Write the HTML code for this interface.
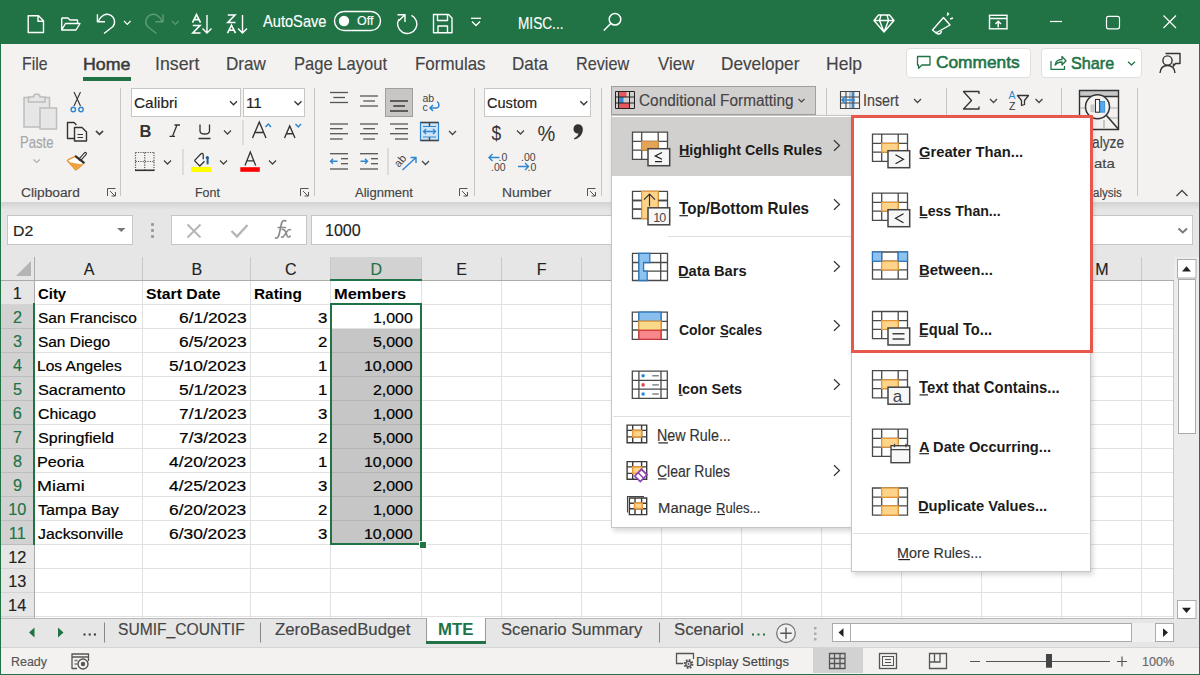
<!DOCTYPE html><html><head><meta charset="utf-8"><style>
html,body{margin:0;padding:0;}
body{width:1200px;height:675px;position:relative;overflow:hidden;background:#fff;font-family:"Liberation Sans",sans-serif;}
.t{position:absolute;white-space:nowrap;line-height:1;transform-origin:0 0;}
svg{overflow:visible}
</style></head><body>
<div style="position:absolute;left:0px;top:0px;width:1200px;height:44px;background:#217346"></div><div style="position:absolute;left:0px;top:44px;width:1200px;height:158px;background:#F3F2F1"></div><div style="position:absolute;left:0px;top:202px;width:1200px;height:55px;background:linear-gradient(#d2d2d2,#e6e6e6 8px)"></div><div style="position:absolute;left:7px;top:215px;width:126px;height:30px;background:#fff;border:1px solid #c6c6c6;box-sizing:border-box"></div><div style="position:absolute;left:171px;top:215px;width:136px;height:30px;background:#fff;border:1px solid #c6c6c6;box-sizing:border-box"></div><div style="position:absolute;left:311px;top:215px;width:882px;height:30px;background:#fff;border:1px solid #c6c6c6;box-sizing:border-box"></div><div style="position:absolute;left:151px;top:223px;width:3px;height:3px;background:#9a9a9a;border-radius:1px"></div><div style="position:absolute;left:151px;top:229px;width:3px;height:3px;background:#9a9a9a;border-radius:1px"></div><div style="position:absolute;left:151px;top:235px;width:3px;height:3px;background:#9a9a9a;border-radius:1px"></div><div style="position:absolute;left:0px;top:257px;width:1174px;height:24px;background:#e6e6e6"></div><div style="position:absolute;left:0px;top:280px;width:1174px;height:1px;background:#ababab"></div><div style="position:absolute;left:0px;top:281px;width:35px;height:337px;background:#e6e6e6"></div><div style="position:absolute;left:34px;top:257px;width:1px;height:361px;background:#ababab"></div><div style="position:absolute;left:35px;top:281px;width:1139px;height:337px;background:#fff"></div><div style="position:absolute;left:142px;top:281px;width:1px;height:337px;background:#e1e1e1"></div><div style="position:absolute;left:142px;top:257px;width:1px;height:23px;background:#c8c8c8"></div><div style="position:absolute;left:250px;top:281px;width:1px;height:337px;background:#e1e1e1"></div><div style="position:absolute;left:250px;top:257px;width:1px;height:23px;background:#c8c8c8"></div><div style="position:absolute;left:330px;top:281px;width:1px;height:337px;background:#e1e1e1"></div><div style="position:absolute;left:330px;top:257px;width:1px;height:23px;background:#c8c8c8"></div><div style="position:absolute;left:421px;top:281px;width:1px;height:337px;background:#e1e1e1"></div><div style="position:absolute;left:421px;top:257px;width:1px;height:23px;background:#c8c8c8"></div><div style="position:absolute;left:501px;top:281px;width:1px;height:337px;background:#e1e1e1"></div><div style="position:absolute;left:501px;top:257px;width:1px;height:23px;background:#c8c8c8"></div><div style="position:absolute;left:581px;top:281px;width:1px;height:337px;background:#e1e1e1"></div><div style="position:absolute;left:581px;top:257px;width:1px;height:23px;background:#c8c8c8"></div><div style="position:absolute;left:661px;top:281px;width:1px;height:337px;background:#e1e1e1"></div><div style="position:absolute;left:661px;top:257px;width:1px;height:23px;background:#c8c8c8"></div><div style="position:absolute;left:741px;top:281px;width:1px;height:337px;background:#e1e1e1"></div><div style="position:absolute;left:741px;top:257px;width:1px;height:23px;background:#c8c8c8"></div><div style="position:absolute;left:821px;top:281px;width:1px;height:337px;background:#e1e1e1"></div><div style="position:absolute;left:821px;top:257px;width:1px;height:23px;background:#c8c8c8"></div><div style="position:absolute;left:901px;top:281px;width:1px;height:337px;background:#e1e1e1"></div><div style="position:absolute;left:901px;top:257px;width:1px;height:23px;background:#c8c8c8"></div><div style="position:absolute;left:981px;top:281px;width:1px;height:337px;background:#e1e1e1"></div><div style="position:absolute;left:981px;top:257px;width:1px;height:23px;background:#c8c8c8"></div><div style="position:absolute;left:1061px;top:281px;width:1px;height:337px;background:#e1e1e1"></div><div style="position:absolute;left:1061px;top:257px;width:1px;height:23px;background:#c8c8c8"></div><div style="position:absolute;left:1141px;top:281px;width:1px;height:337px;background:#e1e1e1"></div><div style="position:absolute;left:1141px;top:257px;width:1px;height:23px;background:#c8c8c8"></div><div style="position:absolute;left:35px;top:304px;width:1139px;height:1px;background:#e1e1e1"></div><div style="position:absolute;left:0px;top:304px;width:34px;height:1px;background:#d4d4d4"></div><div style="position:absolute;left:35px;top:328px;width:1139px;height:1px;background:#e1e1e1"></div><div style="position:absolute;left:0px;top:328px;width:34px;height:1px;background:#d4d4d4"></div><div style="position:absolute;left:35px;top:352px;width:1139px;height:1px;background:#e1e1e1"></div><div style="position:absolute;left:0px;top:352px;width:34px;height:1px;background:#d4d4d4"></div><div style="position:absolute;left:35px;top:376px;width:1139px;height:1px;background:#e1e1e1"></div><div style="position:absolute;left:0px;top:376px;width:34px;height:1px;background:#d4d4d4"></div><div style="position:absolute;left:35px;top:400px;width:1139px;height:1px;background:#e1e1e1"></div><div style="position:absolute;left:0px;top:400px;width:34px;height:1px;background:#d4d4d4"></div><div style="position:absolute;left:35px;top:424px;width:1139px;height:1px;background:#e1e1e1"></div><div style="position:absolute;left:0px;top:424px;width:34px;height:1px;background:#d4d4d4"></div><div style="position:absolute;left:35px;top:448px;width:1139px;height:1px;background:#e1e1e1"></div><div style="position:absolute;left:0px;top:448px;width:34px;height:1px;background:#d4d4d4"></div><div style="position:absolute;left:35px;top:472px;width:1139px;height:1px;background:#e1e1e1"></div><div style="position:absolute;left:0px;top:472px;width:34px;height:1px;background:#d4d4d4"></div><div style="position:absolute;left:35px;top:496px;width:1139px;height:1px;background:#e1e1e1"></div><div style="position:absolute;left:0px;top:496px;width:34px;height:1px;background:#d4d4d4"></div><div style="position:absolute;left:35px;top:520px;width:1139px;height:1px;background:#e1e1e1"></div><div style="position:absolute;left:0px;top:520px;width:34px;height:1px;background:#d4d4d4"></div><div style="position:absolute;left:35px;top:544px;width:1139px;height:1px;background:#e1e1e1"></div><div style="position:absolute;left:0px;top:544px;width:34px;height:1px;background:#d4d4d4"></div><div style="position:absolute;left:35px;top:568px;width:1139px;height:1px;background:#e1e1e1"></div><div style="position:absolute;left:0px;top:568px;width:34px;height:1px;background:#d4d4d4"></div><div style="position:absolute;left:35px;top:592px;width:1139px;height:1px;background:#e1e1e1"></div><div style="position:absolute;left:0px;top:592px;width:34px;height:1px;background:#d4d4d4"></div><div style="position:absolute;left:35px;top:616px;width:1139px;height:1px;background:#e1e1e1"></div><div style="position:absolute;left:0px;top:616px;width:34px;height:1px;background:#d4d4d4"></div><div style="position:absolute;left:331px;top:257px;width:90px;height:23px;background:#d2d2d2"></div><div style="position:absolute;left:330px;top:279px;width:92px;height:2px;background:#217346"></div><div style="position:absolute;left:0px;top:305px;width:34px;height:240px;background:#d2d2d2"></div><div style="position:absolute;left:0px;top:328px;width:33px;height:1px;background:#bdbdbd"></div><div style="position:absolute;left:0px;top:352px;width:33px;height:1px;background:#bdbdbd"></div><div style="position:absolute;left:0px;top:376px;width:33px;height:1px;background:#bdbdbd"></div><div style="position:absolute;left:0px;top:400px;width:33px;height:1px;background:#bdbdbd"></div><div style="position:absolute;left:0px;top:424px;width:33px;height:1px;background:#bdbdbd"></div><div style="position:absolute;left:0px;top:448px;width:33px;height:1px;background:#bdbdbd"></div><div style="position:absolute;left:0px;top:472px;width:33px;height:1px;background:#bdbdbd"></div><div style="position:absolute;left:0px;top:496px;width:33px;height:1px;background:#bdbdbd"></div><div style="position:absolute;left:0px;top:520px;width:33px;height:1px;background:#bdbdbd"></div><div style="position:absolute;left:0px;top:544px;width:33px;height:1px;background:#bdbdbd"></div><div style="position:absolute;left:33px;top:303px;width:2px;height:242px;background:#217346"></div><div style="position:absolute;left:331px;top:329px;width:90px;height:215px;background:#c6c6c6"></div><div style="position:absolute;left:331px;top:352px;width:90px;height:1px;background:#b4b4b4"></div><div style="position:absolute;left:331px;top:376px;width:90px;height:1px;background:#b4b4b4"></div><div style="position:absolute;left:331px;top:400px;width:90px;height:1px;background:#b4b4b4"></div><div style="position:absolute;left:331px;top:424px;width:90px;height:1px;background:#b4b4b4"></div><div style="position:absolute;left:331px;top:448px;width:90px;height:1px;background:#b4b4b4"></div><div style="position:absolute;left:331px;top:472px;width:90px;height:1px;background:#b4b4b4"></div><div style="position:absolute;left:331px;top:496px;width:90px;height:1px;background:#b4b4b4"></div><div style="position:absolute;left:331px;top:520px;width:90px;height:1px;background:#b4b4b4"></div><div style="position:absolute;left:331px;top:544px;width:90px;height:1px;background:#b4b4b4"></div><div style="position:absolute;left:330px;top:303px;width:92px;height:2px;background:#217346"></div><div style="position:absolute;left:330px;top:543px;width:92px;height:2px;background:#217346"></div><div style="position:absolute;left:330px;top:303px;width:2px;height:242px;background:#217346"></div><div style="position:absolute;left:420px;top:303px;width:2px;height:242px;background:#217346"></div><div style="position:absolute;left:419px;top:541px;width:6px;height:6px;background:#217346;border:1px solid #fff"></div><svg style="position:absolute;left:14px;top:260px;" width="20" height="18" viewBox="0 0 20 18" fill="none"><path d="M17 1 L17 16 L2 16 Z" fill="#b4b4b4"/></svg><div style="position:absolute;left:1174px;top:257px;width:25px;height:361px;background:#ececec"></div><div style="position:absolute;left:1173px;top:281px;width:1px;height:337px;background:#c8c8c8"></div><div style="position:absolute;left:0px;top:618px;width:1200px;height:29px;background:#e6e6e6"></div><div style="position:absolute;left:0px;top:618px;width:1174px;height:1px;background:#b9b9b9"></div><div style="position:absolute;left:1132px;top:623px;width:23px;height:19px;background:#f0f0f0"></div><div style="position:absolute;left:0px;top:647px;width:1200px;height:1px;background:#d4d4d4"></div><div style="position:absolute;left:0px;top:648px;width:1200px;height:27px;background:#f3f2f1"></div><div style="position:absolute;left:0px;top:674px;width:1200px;height:1px;background:#217346"></div><div style="position:absolute;left:0px;top:44px;width:1px;height:631px;background:#217346"></div><div style="position:absolute;left:1199px;top:44px;width:1px;height:631px;background:#217346"></div><div class="t" style="left:263.00px;top:14px;font-size:15.7px;font-weight:normal;color:#fff;transform:scaleX(0.9331);-webkit-text-stroke:0.15px #fff;">AutoSave</div><div class="t" style="left:517.71px;top:16px;font-size:15.7px;font-weight:normal;color:#fff;transform:scaleX(0.8692);-webkit-text-stroke:0.15px #fff;">MISC...</div><div class="t" style="left:21.54px;top:56px;font-size:17.73px;font-weight:normal;color:#444;transform:scaleX(0.8902);-webkit-text-stroke:0.15px #444;">File</div><div class="t" style="left:155.10px;top:56px;font-size:17.73px;font-weight:normal;color:#444;transform:scaleX(1.0003);-webkit-text-stroke:0.15px #444;">Insert</div><div class="t" style="left:226.23px;top:56px;font-size:17.73px;font-weight:normal;color:#444;transform:scaleX(0.9628);-webkit-text-stroke:0.15px #444;">Draw</div><div class="t" style="left:294.17px;top:56px;font-size:17.73px;font-weight:normal;color:#444;transform:scaleX(0.9350);-webkit-text-stroke:0.15px #444;">Page Layout</div><div class="t" style="left:415.35px;top:56px;font-size:17.73px;font-weight:normal;color:#444;transform:scaleX(0.9550);-webkit-text-stroke:0.15px #444;">Formulas</div><div class="t" style="left:511.94px;top:56px;font-size:17.73px;font-weight:normal;color:#444;transform:scaleX(0.9612);-webkit-text-stroke:0.15px #444;">Data</div><div class="t" style="left:575.70px;top:56px;font-size:17.73px;font-weight:normal;color:#444;transform:scaleX(0.9146);-webkit-text-stroke:0.15px #444;">Review</div><div class="t" style="left:657.50px;top:56px;font-size:17.73px;font-weight:normal;color:#444;transform:scaleX(0.9491);-webkit-text-stroke:0.15px #444;">View</div><div class="t" style="left:720.62px;top:56px;font-size:17.73px;font-weight:normal;color:#444;transform:scaleX(0.9701);-webkit-text-stroke:0.15px #444;">Developer</div><div class="t" style="left:825.60px;top:56px;font-size:17.73px;font-weight:normal;color:#444;transform:scaleX(0.9882);-webkit-text-stroke:0.15px #444;">Help</div><div class="t" style="left:82.58px;top:56px;font-size:17.01px;font-weight:normal;color:#3a3a3a;transform:scaleX(1.0461);-webkit-text-stroke:0.5px #3a3a3a;">Home</div><div style="position:absolute;left:83px;top:77px;width:48px;height:4px;background:#217346"></div><div class="t" style="left:357.40px;top:15px;font-size:12.06px;font-weight:normal;color:#fff;transform:scaleX(1.0319);-webkit-text-stroke:0.15px #fff;">Off</div><div style="position:absolute;left:906px;top:48px;width:125px;height:30px;background:#fff;border:1px solid #e1dfdd;border-radius:4px;box-sizing:border-box"></div><div style="position:absolute;left:1041px;top:48px;width:101px;height:30px;background:#fff;border:1px solid #e1dfdd;border-radius:4px;box-sizing:border-box"></div><div class="t" style="left:935.63px;top:54px;font-size:16.28px;font-weight:normal;color:#217346;transform:scaleX(1.0633);-webkit-text-stroke:0.55px #217346;">Comments</div><div class="t" style="left:1071.05px;top:55px;font-size:17.01px;font-weight:normal;color:#217346;transform:scaleX(0.9525);-webkit-text-stroke:0.55px #217346;">Share</div><div style="position:absolute;left:131px;top:88px;width:110px;height:29px;background:#fff;border:1px solid #c8c6c4;box-sizing:border-box"></div><div style="position:absolute;left:243px;top:88px;width:62px;height:29px;background:#fff;border:1px solid #c8c6c4;box-sizing:border-box"></div><div style="position:absolute;left:484px;top:88px;width:107px;height:29px;background:#fff;border:1px solid #c8c6c4;box-sizing:border-box"></div><div class="t" style="left:133.93px;top:95px;font-size:15.55px;font-weight:normal;color:#222;transform:scaleX(0.9876);-webkit-text-stroke:0.15px #222;">Calibri</div><div class="t" style="left:245.63px;top:95px;font-size:15.26px;font-weight:normal;color:#222;transform:scaleX(1.0022);-webkit-text-stroke:0.15px #222;">11</div><div class="t" style="left:486.77px;top:95px;font-size:15.55px;font-weight:normal;color:#222;transform:scaleX(0.9360);-webkit-text-stroke:0.15px #222;">Custom</div><div class="t" style="left:19.95px;top:135px;font-size:15.99px;font-weight:normal;color:#a6a6a6;transform:scaleX(0.8199);-webkit-text-stroke:0.15px #a6a6a6;">Paste</div><div class="t" style="left:20.61px;top:187px;font-size:12.65px;font-weight:normal;color:#444;transform:scaleX(1.0871);-webkit-text-stroke:0.15px #444;">Clipboard</div><div class="t" style="left:195.00px;top:187px;font-size:12.65px;font-weight:normal;color:#444;transform:scaleX(0.9865);-webkit-text-stroke:0.15px #444;">Font</div><div class="t" style="left:355.00px;top:187px;font-size:12.65px;font-weight:normal;color:#444;transform:scaleX(1.0306);-webkit-text-stroke:0.15px #444;">Alignment</div><div class="t" style="left:501.89px;top:187px;font-size:12.65px;font-weight:normal;color:#444;transform:scaleX(1.0955);-webkit-text-stroke:0.15px #444;">Number</div><div class="t" style="left:1092.54px;top:187px;font-size:12.65px;font-weight:normal;color:#444;transform:scaleX(0.9107);-webkit-text-stroke:0.15px #444;">alysis</div><div class="t" style="left:1092.45px;top:135px;font-size:15.99px;font-weight:normal;color:#444;transform:scaleX(0.8585);-webkit-text-stroke:0.15px #444;">alyze</div><div class="t" style="left:1093.80px;top:157px;font-size:13.37px;font-weight:normal;color:#444;transform:scaleX(1.1159);-webkit-text-stroke:0.15px #444;">ata</div><div style="position:absolute;left:120px;top:88px;width:1px;height:108px;background:#c8c6c4"></div><div style="position:absolute;left:314px;top:88px;width:1px;height:108px;background:#c8c6c4"></div><div style="position:absolute;left:474px;top:88px;width:1px;height:108px;background:#c8c6c4"></div><div style="position:absolute;left:601px;top:88px;width:1px;height:108px;background:#c8c6c4"></div><div style="position:absolute;left:1137px;top:88px;width:1px;height:108px;background:#c8c6c4"></div><div style="position:absolute;left:826px;top:88px;width:1px;height:28px;background:#c8c6c4"></div><div style="position:absolute;left:946px;top:88px;width:1px;height:28px;background:#c8c6c4"></div><div style="position:absolute;left:1061px;top:88px;width:1px;height:28px;background:#c8c6c4"></div><div style="position:absolute;left:611px;top:86px;width:205px;height:29px;background:#d2d0ce;border:1px solid #a19f9d;box-sizing:border-box"></div><div class="t" style="left:638.73px;top:93px;font-size:15.84px;font-weight:normal;color:#444;transform:scaleX(0.9703);-webkit-text-stroke:0.15px #444;">Conditional Formatting</div><div class="t" style="left:863.21px;top:93px;font-size:15.84px;font-weight:normal;color:#444;transform:scaleX(0.9026);-webkit-text-stroke:0.15px #444;">Insert</div><div class="t" style="left:13.43px;top:224px;font-size:14.97px;font-weight:normal;color:#222;transform:scaleX(1.0610);-webkit-text-stroke:0.15px #222;">D2</div><div class="t" style="left:324.88px;top:222px;font-size:16.42px;font-weight:normal;color:#222;transform:scaleX(0.9774);-webkit-text-stroke:0.15px #222;">1000</div><div class="t" style="left:83.64px;top:262px;font-size:16px;font-weight:normal;color:#222;transform:scaleX(1.0000);-webkit-text-stroke:0.15px #222;">A</div><div class="t" style="left:191.40px;top:262px;font-size:16px;font-weight:normal;color:#222;transform:scaleX(1.0000);-webkit-text-stroke:0.15px #222;">B</div><div class="t" style="left:285.08px;top:262px;font-size:16px;font-weight:normal;color:#222;transform:scaleX(1.0000);-webkit-text-stroke:0.15px #222;">C</div><div class="t" style="left:370.42px;top:262px;font-size:16px;font-weight:normal;color:#217346;transform:scaleX(1.0000);-webkit-text-stroke:0.15px #217346;">D</div><div class="t" style="left:456.32px;top:262px;font-size:16px;font-weight:normal;color:#222;transform:scaleX(1.0000);-webkit-text-stroke:0.15px #222;">E</div><div class="t" style="left:536.72px;top:262px;font-size:16px;font-weight:normal;color:#222;transform:scaleX(1.0000);-webkit-text-stroke:0.15px #222;">F</div><div class="t" style="left:615.92px;top:262px;font-size:16px;font-weight:normal;color:#222;transform:scaleX(1.0000);-webkit-text-stroke:0.15px #222;">G</div><div class="t" style="left:696.16px;top:262px;font-size:16px;font-weight:normal;color:#222;transform:scaleX(1.0000);-webkit-text-stroke:0.15px #222;">H</div><div class="t" style="left:779.76px;top:262px;font-size:16px;font-weight:normal;color:#222;transform:scaleX(1.0000);-webkit-text-stroke:0.15px #222;">I</div><div class="t" style="left:858.48px;top:262px;font-size:16px;font-weight:normal;color:#222;transform:scaleX(1.0000);-webkit-text-stroke:0.15px #222;">J</div><div class="t" style="left:936.08px;top:262px;font-size:16px;font-weight:normal;color:#222;transform:scaleX(1.0000);-webkit-text-stroke:0.15px #222;">K</div><div class="t" style="left:1017.12px;top:262px;font-size:16px;font-weight:normal;color:#222;transform:scaleX(1.0000);-webkit-text-stroke:0.15px #222;">L</div><div class="t" style="left:1095.28px;top:262px;font-size:16px;font-weight:normal;color:#222;transform:scaleX(1.0000);-webkit-text-stroke:0.15px #222;">M</div><div class="t" style="left:38.10px;top:286px;font-size:15.3px;font-weight:bold;color:#000;transform:scaleX(0.9735);">City</div><div class="t" style="left:146.18px;top:286px;font-size:15.3px;font-weight:bold;color:#000;transform:scaleX(1.0312);">Start Date</div><div class="t" style="left:254.08px;top:286px;font-size:15.3px;font-weight:bold;color:#000;transform:scaleX(1.0055);">Rating</div><div class="t" style="left:334.01px;top:286px;font-size:15.3px;font-weight:bold;color:#000;transform:scaleX(1.0745);">Members</div><div class="t" style="left:37.98px;top:310px;font-size:15.3px;font-weight:normal;color:#000;transform:scaleX(1.0101);-webkit-text-stroke:0.2px #000;">San Francisco</div><div class="t" style="left:179.03px;top:310px;font-size:15.3px;font-weight:normal;color:#000;transform:scaleX(1.1350);-webkit-text-stroke:0.2px #000;">6/1/2023</div><div class="t" style="left:317.65px;top:310px;font-size:15.3px;font-weight:normal;color:#000;transform:scaleX(1.1000);-webkit-text-stroke:0.2px #000;">3</div><div class="t" style="left:372.76px;top:310px;font-size:15.3px;font-weight:normal;color:#000;transform:scaleX(1.0400);-webkit-text-stroke:0.2px #000;">1,000</div><div class="t" style="left:37.98px;top:334px;font-size:15.3px;font-weight:normal;color:#000;transform:scaleX(1.0088);-webkit-text-stroke:0.2px #000;">San Diego</div><div class="t" style="left:179.03px;top:334px;font-size:15.3px;font-weight:normal;color:#000;transform:scaleX(1.1350);-webkit-text-stroke:0.2px #000;">6/5/2023</div><div class="t" style="left:317.82px;top:334px;font-size:15.3px;font-weight:normal;color:#000;transform:scaleX(1.1000);-webkit-text-stroke:0.2px #000;">2</div><div class="t" style="left:372.76px;top:334px;font-size:15.3px;font-weight:normal;color:#000;transform:scaleX(1.0400);-webkit-text-stroke:0.2px #000;">5,000</div><div class="t" style="left:37.36px;top:358px;font-size:15.3px;font-weight:normal;color:#000;transform:scaleX(1.0166);-webkit-text-stroke:0.2px #000;">Los Angeles</div><div class="t" style="left:169.37px;top:358px;font-size:15.3px;font-weight:normal;color:#000;transform:scaleX(1.1350);-webkit-text-stroke:0.2px #000;">5/10/2023</div><div class="t" style="left:317.82px;top:358px;font-size:15.3px;font-weight:normal;color:#000;transform:scaleX(1.1000);-webkit-text-stroke:0.2px #000;">1</div><div class="t" style="left:363.91px;top:358px;font-size:15.3px;font-weight:normal;color:#000;transform:scaleX(1.0400);-webkit-text-stroke:0.2px #000;">10,000</div><div class="t" style="left:37.95px;top:382px;font-size:15.3px;font-weight:normal;color:#000;transform:scaleX(1.0624);-webkit-text-stroke:0.2px #000;">Sacramento</div><div class="t" style="left:179.03px;top:382px;font-size:15.3px;font-weight:normal;color:#000;transform:scaleX(1.1350);-webkit-text-stroke:0.2px #000;">5/1/2023</div><div class="t" style="left:317.82px;top:382px;font-size:15.3px;font-weight:normal;color:#000;transform:scaleX(1.1000);-webkit-text-stroke:0.2px #000;">1</div><div class="t" style="left:372.76px;top:382px;font-size:15.3px;font-weight:normal;color:#000;transform:scaleX(1.0400);-webkit-text-stroke:0.2px #000;">2,000</div><div class="t" style="left:37.81px;top:406px;font-size:15.3px;font-weight:normal;color:#000;transform:scaleX(1.0344);-webkit-text-stroke:0.2px #000;">Chicago</div><div class="t" style="left:179.03px;top:406px;font-size:15.3px;font-weight:normal;color:#000;transform:scaleX(1.1350);-webkit-text-stroke:0.2px #000;">7/1/2023</div><div class="t" style="left:317.65px;top:406px;font-size:15.3px;font-weight:normal;color:#000;transform:scaleX(1.1000);-webkit-text-stroke:0.2px #000;">3</div><div class="t" style="left:372.76px;top:406px;font-size:15.3px;font-weight:normal;color:#000;transform:scaleX(1.0400);-webkit-text-stroke:0.2px #000;">1,000</div><div class="t" style="left:37.96px;top:430px;font-size:15.3px;font-weight:normal;color:#000;transform:scaleX(1.0519);-webkit-text-stroke:0.2px #000;">Springfield</div><div class="t" style="left:179.03px;top:430px;font-size:15.3px;font-weight:normal;color:#000;transform:scaleX(1.1350);-webkit-text-stroke:0.2px #000;">7/3/2023</div><div class="t" style="left:317.82px;top:430px;font-size:15.3px;font-weight:normal;color:#000;transform:scaleX(1.1000);-webkit-text-stroke:0.2px #000;">2</div><div class="t" style="left:372.76px;top:430px;font-size:15.3px;font-weight:normal;color:#000;transform:scaleX(1.0400);-webkit-text-stroke:0.2px #000;">5,000</div><div class="t" style="left:37.30px;top:454px;font-size:15.3px;font-weight:normal;color:#000;transform:scaleX(1.0613);-webkit-text-stroke:0.2px #000;">Peoria</div><div class="t" style="left:169.37px;top:454px;font-size:15.3px;font-weight:normal;color:#000;transform:scaleX(1.1350);-webkit-text-stroke:0.2px #000;">4/20/2023</div><div class="t" style="left:317.82px;top:454px;font-size:15.3px;font-weight:normal;color:#000;transform:scaleX(1.1000);-webkit-text-stroke:0.2px #000;">1</div><div class="t" style="left:363.91px;top:454px;font-size:15.3px;font-weight:normal;color:#000;transform:scaleX(1.0400);-webkit-text-stroke:0.2px #000;">10,000</div><div class="t" style="left:37.17px;top:478px;font-size:15.3px;font-weight:normal;color:#000;transform:scaleX(1.1703);-webkit-text-stroke:0.2px #000;">Miami</div><div class="t" style="left:169.37px;top:478px;font-size:15.3px;font-weight:normal;color:#000;transform:scaleX(1.1350);-webkit-text-stroke:0.2px #000;">4/25/2023</div><div class="t" style="left:317.65px;top:478px;font-size:15.3px;font-weight:normal;color:#000;transform:scaleX(1.1000);-webkit-text-stroke:0.2px #000;">3</div><div class="t" style="left:372.76px;top:478px;font-size:15.3px;font-weight:normal;color:#000;transform:scaleX(1.0400);-webkit-text-stroke:0.2px #000;">2,000</div><div class="t" style="left:38.28px;top:502px;font-size:15.3px;font-weight:normal;color:#000;transform:scaleX(1.0547);-webkit-text-stroke:0.2px #000;">Tampa Bay</div><div class="t" style="left:169.37px;top:502px;font-size:15.3px;font-weight:normal;color:#000;transform:scaleX(1.1350);-webkit-text-stroke:0.2px #000;">6/20/2023</div><div class="t" style="left:317.82px;top:502px;font-size:15.3px;font-weight:normal;color:#000;transform:scaleX(1.1000);-webkit-text-stroke:0.2px #000;">2</div><div class="t" style="left:372.76px;top:502px;font-size:15.3px;font-weight:normal;color:#000;transform:scaleX(1.0400);-webkit-text-stroke:0.2px #000;">1,000</div><div class="t" style="left:38.44px;top:526px;font-size:15.3px;font-weight:normal;color:#000;transform:scaleX(1.0345);-webkit-text-stroke:0.2px #000;">Jacksonville</div><div class="t" style="left:169.37px;top:526px;font-size:15.3px;font-weight:normal;color:#000;transform:scaleX(1.1350);-webkit-text-stroke:0.2px #000;">6/30/2023</div><div class="t" style="left:317.65px;top:526px;font-size:15.3px;font-weight:normal;color:#000;transform:scaleX(1.1000);-webkit-text-stroke:0.2px #000;">3</div><div class="t" style="left:363.91px;top:526px;font-size:15.3px;font-weight:normal;color:#000;transform:scaleX(1.0400);-webkit-text-stroke:0.2px #000;">10,000</div><div class="t" style="left:12.77px;top:285px;font-size:16.3px;font-weight:normal;color:#222;transform:scaleX(1.0000);-webkit-text-stroke:0.15px #222;">1</div><div class="t" style="left:12.94px;top:309px;font-size:16.3px;font-weight:normal;color:#217346;transform:scaleX(1.0000);-webkit-text-stroke:0.15px #217346;">2</div><div class="t" style="left:13.02px;top:333px;font-size:16.3px;font-weight:normal;color:#217346;transform:scaleX(1.0000);-webkit-text-stroke:0.15px #217346;">3</div><div class="t" style="left:13.02px;top:357px;font-size:16.3px;font-weight:normal;color:#217346;transform:scaleX(1.0000);-webkit-text-stroke:0.15px #217346;">4</div><div class="t" style="left:12.94px;top:381px;font-size:16.3px;font-weight:normal;color:#217346;transform:scaleX(1.0000);-webkit-text-stroke:0.15px #217346;">5</div><div class="t" style="left:12.85px;top:405px;font-size:16.3px;font-weight:normal;color:#217346;transform:scaleX(1.0000);-webkit-text-stroke:0.15px #217346;">6</div><div class="t" style="left:12.94px;top:429px;font-size:16.3px;font-weight:normal;color:#217346;transform:scaleX(1.0000);-webkit-text-stroke:0.15px #217346;">7</div><div class="t" style="left:12.94px;top:453px;font-size:16.3px;font-weight:normal;color:#217346;transform:scaleX(1.0000);-webkit-text-stroke:0.15px #217346;">8</div><div class="t" style="left:13.02px;top:477px;font-size:16.3px;font-weight:normal;color:#217346;transform:scaleX(1.0000);-webkit-text-stroke:0.15px #217346;">9</div><div class="t" style="left:8.16px;top:501px;font-size:16.3px;font-weight:normal;color:#217346;transform:scaleX(1.0000);-webkit-text-stroke:0.15px #217346;">10</div><div class="t" style="left:8.85px;top:525px;font-size:16.3px;font-weight:normal;color:#217346;transform:scaleX(1.0000);-webkit-text-stroke:0.15px #217346;">11</div><div class="t" style="left:8.24px;top:549px;font-size:16.3px;font-weight:normal;color:#222;transform:scaleX(1.0000);-webkit-text-stroke:0.15px #222;">12</div><div class="t" style="left:8.16px;top:573px;font-size:16.3px;font-weight:normal;color:#222;transform:scaleX(1.0000);-webkit-text-stroke:0.15px #222;">13</div><div class="t" style="left:8.08px;top:597px;font-size:16.3px;font-weight:normal;color:#222;transform:scaleX(1.0000);-webkit-text-stroke:0.15px #222;">14</div><svg style="position:absolute;left:0;top:0" width="1200" height="675" viewBox="0 0 1200 675" fill="none"><g stroke="#fff" stroke-width="1.4" stroke-linejoin="round"><path d="M28.2 15.7 H38.5 L43.5 20.7 V32.5 H28.2 Z M38 15.7 V21.2 H43.5"/><path d="M61.7 18 H68 L70 20 H77.5 V23 M61.7 18 V30 H76 L80 23.5 H65.5 L61.7 30"/><path d="M97.4 14.2 V21.8 H105 M98.5 21 C101 15 106 13.2 110 14.8 C114.5 16.8 116 22.5 113 26.5 L104 33.5"/><path d="M124 21 L127.3 24.3 L130.6 21" stroke-width="1.2"/></g><g stroke="#5e9c79" stroke-width="1.4" stroke-linejoin="round"><path d="M163 14.2 V21.8 H155.4 M161.9 21 C159.4 15 154.4 13.2 150.4 14.8 C145.9 16.8 144.4 22.5 147.4 26.5 L156.4 33.5"/><path d="M172 21 L175.3 24.3 L178.6 21" stroke-width="1.2"/></g><g stroke="#fff" stroke-width="1.6" stroke-linejoin="miter"><path d="M192.5 22.6 L196.5 14.6 L200.5 22.6 M194.2 19.6 H198.8 M192.8 25.5 H200 L192.8 33 H200.5"/><path d="M227.8 15 H235 L227.8 22.5 H235.5 M227.5 33.2 L231.5 25.2 L235.5 33.2 M229.2 30.2 H233.8"/></g><g stroke="#fff" stroke-width="1.4"><path d="M207 15 V33 M202.5 28.5 L207 33 L211.5 28.5"/><path d="M242.5 15 V33 M238 28.5 L242.5 33 L247 28.5"/></g><rect x="334.5" y="11.5" width="46" height="19" rx="9.5" stroke="#fff" stroke-width="1.4"/><circle cx="344" cy="21" r="5.2" fill="#fff"/><g stroke="#fff" stroke-width="1.4"><path d="M411.5 15.3 A9.6 9.6 0 1 1 399 19"/><path d="M397.5 14.7 H405 V22 M405 14.7 L398.5 21"/></g><g stroke="#fff" stroke-width="1.4" stroke-linejoin="round"><path d="M433.5 14.5 H448.5 L452 18 V32.7 H433.5 Z"/><path d="M437.5 14.5 V20.5 H447.5 V14.5 M438 32.7 V26 H447.5 V32.7"/></g><g stroke="#fff" stroke-width="1.3"><path d="M471 18.3 H481"/><path d="M472 21.5 L476 25.5 L480 21.5"/></g><g stroke="#fff" stroke-width="1.5"><circle cx="615" cy="19.3" r="5.8"/><path d="M610.8 23.5 L603.8 30.5"/></g><g stroke="#fff" stroke-width="1.4" stroke-linejoin="round"><path d="M878.5 15 H889.5 L894 20.5 L884 32 L874 20.5 Z M874 20.5 H894 M881 15 L879.5 20.5 L884 32 L888.5 20.5 L887 15"/></g><g stroke="#fff" stroke-width="1.4" stroke-linejoin="round"><path d="M943.5 17.5 L932.5 30 L936 33 L950 25 Z M936 31.5 C936 35 941 35 941.5 31"/><path d="M947 15.5 L949 13.5 M950 19 L953 18 M947.5 14 L948 12.5"/></g><g stroke="#fff" stroke-width="1.4"><rect x="989.5" y="15.3" width="17.5" height="13.5"/><path d="M989.5 18.5 H1007 M998.2 27.5 V21.5 M995.5 24 L998.2 21.3 L1001 24"/></g><g stroke="#fff" stroke-width="1.2"><path d="M1050 21.5 H1062"/><rect x="1106.5" y="16.3" width="13" height="12.5" rx="2"/><path d="M1163.5 15.5 L1176 28 M1176 15.5 L1163.5 28"/></g><g stroke="#217346" stroke-width="1.3" stroke-linejoin="round"><path d="M917.5 56.5 H930 V65 H922 L918.5 68.3 V65 H917.5 Z"/><path d="M1051 61 V69.3 H1064.5 V66 M1055 65.5 C1055.5 61 1058 59.5 1062 59.5 V56.5 L1066 60.8 L1062 65 V62 C1059 62 1056.5 63 1055 65.5"/><path d="M1128 61.8 L1131.5 65 L1135 61.8"/></g><g stroke="#333" stroke-width="1.4" stroke-linejoin="round"><circle cx="1167.5" cy="60.5" r="4.6"/><path d="M1160 73 C1160.5 67 1163.5 65.5 1167.5 65.5 C1171.5 65.5 1174.5 67 1175 73"/><path d="M1165.5 53.5 H1180 V63.5 H1175.5 L1173.5 66 V63.5"/></g></svg><svg style="position:absolute;left:0;top:0" width="1200" height="675" viewBox="0 0 1200 675" fill="none"><g stroke="#bdbdbd" stroke-width="1.5" fill="#e6e6e6"><rect x="24" y="97.5" width="25.5" height="29.5"/><path d="M28.5 102 V97 H33.5 C33.5 93 40 93 40 97 H45 V102 Z"/><rect x="40" y="108" width="16.5" height="21"/></g><path d="M33.5 159.5 L36.7 162.5 L39.9 159.5" stroke="#b0b0b0" stroke-width="1.2"/><g stroke="#333" stroke-width="1.1"><path d="M74 92 L80.5 106 M80.5 92 L74 106"/></g><g stroke="#2e86d0" stroke-width="1.4"><circle cx="73.3" cy="109.5" r="2.2"/><circle cx="81" cy="109.5" r="2.2"/></g><g stroke="#333" stroke-width="1.4" stroke-linejoin="round"><path d="M75 138.5 H67.5 V122.5 H74 L76.5 125"/><path d="M74.5 127.5 H82 L86.5 132 V141 H74.5 Z"/><path d="M77.5 134.5 H83 M77.5 137.5 H83" stroke-width="1.2"/></g><path d="M96 131 L99.5 134.3 L103 131" stroke="#444" stroke-width="1.3"/><path d="M67.3 160.5 C70 158.5 73 157.5 75.5 156.5 L83.5 163 C81 166 78.5 168.5 75.8 170 Z" fill="#fff" stroke="#e8922a" stroke-width="1.3" stroke-linejoin="round"/><path d="M68.8 162 L81.8 164.6 L75.8 169.3 Z" fill="#f0a040"/><path d="M80.2 159.3 L85.3 153.6" stroke="#333" stroke-width="3.4" stroke-linecap="round"/><path d="M80.2 159.3 L85.3 153.6" stroke="#fff" stroke-width="1.1" stroke-linecap="round"/><path d="M75.8 156.3 L83.8 162.6" stroke="#333" stroke-width="2.2" stroke-linecap="round"/><path d="M230 101.3 L233.5 104.8 L237 101.3" stroke="#333" stroke-width="1.3"/><path d="M294.5 101.3 L298.0 104.8 L301.5 101.3" stroke="#333" stroke-width="1.3"/><path d="M580.3 101.3 L583.8 104.8 L587.3 101.3" stroke="#333" stroke-width="1.3"/><text x="139.5" y="136.5" font-family="Liberation Sans" font-weight="bold" font-size="16.5" fill="#333">B</text><path d="M174.5 125 H180 M169.5 136.3 H175 M177 125 L172.5 136.3" stroke="#333" stroke-width="1.3"/><path d="M200 124.5 V131 C200 135 209.5 135 209.5 131 V124.5 M198.5 138.5 H210.5" stroke="#333" stroke-width="1.3"/><path d="M224 130.5 L227.5 134.0 L231 130.5" stroke="#444" stroke-width="1.3"/><path d="M164 160.5 L167.5 164.0 L171 160.5" stroke="#444" stroke-width="1.3"/><path d="M220 160.5 L223.5 164.0 L227 160.5" stroke="#444" stroke-width="1.3"/><path d="M269 160.5 L272.5 164.0 L276 160.5" stroke="#444" stroke-width="1.3"/><path d="M517 130.5 L520.5 134.0 L524 130.5" stroke="#444" stroke-width="1.3"/><path d="M449 131 L452.5 134.5 L456 131" stroke="#444" stroke-width="1.3"/><path d="M422 161 L425.5 164.5 L429 161" stroke="#444" stroke-width="1.3"/><path d="M96 131 L99.5 134.5 L103 131" stroke="#444" stroke-width="1.3"/><path d="M243 120 V145 M183 149 V175 M388 148 V175" stroke="#c8c6c4" stroke-width="1"/><path d="M252.5 138 L259.3 122 L266 138 M255 132.5 H263.5" stroke="#333" stroke-width="1.4"/><path d="M265.5 127 L268.3 124 L271 127" stroke="#2e86d0" stroke-width="1.5"/><path d="M284.5 138 L289.7 126 L295 138 M286.5 133.8 H293" stroke="#333" stroke-width="1.4"/><path d="M295.5 124 L298.3 127 L301 124" stroke="#2e86d0" stroke-width="1.5"/><path d="M135.5 152.5 H154 M135.5 161.5 H154 M135.5 152.5 V170 M144.7 152.5 V170 M154 152.5 V170" stroke="#555" stroke-width="1.2" stroke-dasharray="1.2 1.2"/><path d="M135 170.3 H154.5" stroke="#333" stroke-width="1.6"/><path d="M194.5 160.6 L199.8 166 L204.5 161.2 M194.5 160.6 L200.8 154 C202 152.8 203.2 153.2 203.2 154.8 V159.2" stroke="#333" stroke-width="1.3" stroke-linejoin="round" fill="#fff"/><path d="M207.6 157.2 V164.3" stroke="#1f5f9a" stroke-width="2"/><circle cx="207.3" cy="157.5" r="1.6" fill="#1f5f9a"/><rect x="191" y="167" width="20.3" height="5" fill="#ffff00"/><path d="M245 165.5 L250.3 152 L255.7 165.5 M247 160.8 H253.6" stroke="#333" stroke-width="1.3"/><rect x="240.3" y="167.2" width="19.5" height="4.6" fill="#f00"/><path d="M330 92.5 H348" stroke="#555" stroke-width="1.3"/><path d="M333.3 97.5 H345" stroke="#555" stroke-width="1.3"/><path d="M330 102.5 H348" stroke="#555" stroke-width="1.3"/><path d="M360 96 H378" stroke="#555" stroke-width="1.3"/><path d="M363.3 101 H375" stroke="#555" stroke-width="1.3"/><path d="M360 106 H378" stroke="#555" stroke-width="1.3"/><rect x="385.5" y="88.5" width="27" height="28" fill="#c8c6c4" stroke="#a19f9d"/><path d="M390 101 H408" stroke="#222" stroke-width="1.3"/><path d="M393.3 106 H405" stroke="#222" stroke-width="1.3"/><path d="M390 111 H408" stroke="#222" stroke-width="1.3"/><text x="422.5" y="101.5" font-family="Liberation Sans" font-size="10.5" fill="#444">ab</text><text x="422.5" y="111" font-family="Liberation Sans" font-size="10.5" fill="#444">c</text><path d="M437 101.5 C440 103.5 439.5 108 436 108 H430.5 M433 105 L430 108 L433 111" stroke="#2e86d0" stroke-width="1.5" fill="none"/><path d="M330 124 H348" stroke="#555" stroke-width="1.3"/><path d="M330 128.7 H342.7" stroke="#555" stroke-width="1.3"/><path d="M330 133.7 H348" stroke="#555" stroke-width="1.3"/><path d="M330 139 H342.7" stroke="#555" stroke-width="1.3"/><path d="M360 124 H378" stroke="#555" stroke-width="1.3"/><path d="M363.3 128.7 H375" stroke="#555" stroke-width="1.3"/><path d="M360 133.7 H378" stroke="#555" stroke-width="1.3"/><path d="M363.3 139 H375" stroke="#555" stroke-width="1.3"/><path d="M390 124 H408" stroke="#555" stroke-width="1.3"/><path d="M395 128.7 H408" stroke="#555" stroke-width="1.3"/><path d="M390 133.7 H408" stroke="#555" stroke-width="1.3"/><path d="M395 139 H408" stroke="#555" stroke-width="1.3"/><rect x="420.5" y="122.5" width="18" height="18" fill="#cfe4f7" stroke="#2e86d0" stroke-width="1.2"/><path d="M420.5 122.5 H438.5 M420.5 140.5 H438.5 M429.5 122.5 V126 M429.5 137 V140.5" stroke="#444" stroke-width="1.4"/><path d="M423 126.5 H436 M423 137 H436" stroke="#2e86d0" stroke-width="1"/><path d="M423.5 131.5 H435.5 M426 129 L423.5 131.5 L426 134 M433 129 L435.5 131.5 L433 134" stroke="#2e86d0" stroke-width="1.3"/><path d="M330 153.7 H348" stroke="#555" stroke-width="1.3"/><path d="M341 158.7 H348" stroke="#555" stroke-width="1.3"/><path d="M341 163.7 H348" stroke="#555" stroke-width="1.3"/><path d="M330 169 H348" stroke="#555" stroke-width="1.3"/><path d="M360 153.7 H378" stroke="#555" stroke-width="1.3"/><path d="M371 158.7 H378" stroke="#555" stroke-width="1.3"/><path d="M371 163.7 H378" stroke="#555" stroke-width="1.3"/><path d="M360 169 H378" stroke="#555" stroke-width="1.3"/><path d="M337.5 161.2 H330.5 M333 158.7 L330.5 161.2 L333 163.7" stroke="#2e86d0" stroke-width="1.4"/><path d="M360.5 161.2 H367.5 M365 158.7 L367.5 161.2 L365 163.7" stroke="#2e86d0" stroke-width="1.4"/><text x="0" y="0" transform="translate(399 168) rotate(-50)" font-family="Liberation Sans" font-size="11" fill="#444">ab</text><path d="M402.5 170 L416 157.5 M410.5 157.5 H416 V163" stroke="#2e86d0" stroke-width="1.4"/><text x="491.5" y="140.3" font-family="Liberation Sans" font-size="20.5" fill="#333" transform="translate(491.5 0) scale(0.85 1) translate(-491.5 0)">$</text><text x="537.5" y="141" font-family="Liberation Sans" font-size="21.5" fill="#333" transform="translate(537.5 0) scale(0.93 1) translate(-537.5 0)">%</text><path d="M576.5 124.5 C581 123.5 584 127 582.5 132 C581.5 135.5 578.5 138.5 574.5 139.5 L574 138.3 C576.5 137 578 135.5 578.5 133.5 C575 133.5 573.5 131.5 573.5 129 C573.5 126.5 575 124.8 576.5 124.5 Z" fill="#333"/><g font-family="Liberation Sans" font-size="10.5" fill="#444"><text x="498.5" y="160.5">.0</text><text x="491" y="170.5">.00</text><text x="521" y="160.5">.00</text><text x="527.5" y="170.5">.0</text></g><path d="M499.5 157.5 H489 M492.5 154 L489 157.5 L492.5 161" stroke="#2e86d0" stroke-width="1.4"/><path d="M518 166.5 H528.5 M525 163 L528.5 166.5 L525 170" stroke="#2e86d0" stroke-width="1.4"/><path d="M107.5 196 V188.5 H115.5 M110 191 L115 196 M111.5 196 H115.5 V192" stroke="#555" stroke-width="1"/><path d="M300.5 196 V188.5 H308.5 M303 191 L308 196 M304.5 196 H308.5 V192" stroke="#555" stroke-width="1"/><path d="M459.5 196 V188.5 H467.5 M462 191 L467 196 M463.5 196 H467.5 V192" stroke="#555" stroke-width="1"/><path d="M587.5 196 V188.5 H595.5 M590 191 L595 196 M591.5 196 H595.5 V192" stroke="#555" stroke-width="1"/><rect x="618.5" y="91.5" width="8" height="5.5" fill="#e8585a"/><rect x="618.5" y="97" width="5" height="6" fill="#3b8ad6"/><rect x="618.5" y="103" width="10.5" height="5.5" fill="#e8585a"/><path d="M615.5 91.5 H634.5 V108.5 H615.5 Z M615.5 97 H634.5 M615.5 103 H634.5 M618.5 91.5 V108.5 M629.5 91.5 V108.5" stroke="#222" stroke-width="1"/><path d="M798.5 99 L801.5 102 L804.5 99" stroke="#444" stroke-width="1.2"/><rect x="849" y="92" width="6" height="16" fill="#9fc8ee"/><path d="M840.5 91.5 H859.5 V108.5 H840.5 Z M840.5 97 H859.5 M840.5 103 H859.5 M846 91.5 V108.5 M853 91.5 V108.5" stroke="#444" stroke-width="1.1"/><path d="M855 100 H842 M845.5 96.5 L842 100 L845.5 103.5" stroke="#2e86d0" stroke-width="1.6"/><path d="M914 99 L917.5 102.5 L921 99" stroke="#444" stroke-width="1.3"/><path d="M979 94 V91.5 H963.5 L971.5 100.5 L963.5 109 H979 V106.5" stroke="#333" stroke-width="1.3" stroke-linejoin="round"/><path d="M990 99 L993.5 102.5 L997 99" stroke="#444" stroke-width="1.3"/><text x="1008.5" y="98.6" font-family="Liberation Sans" font-size="10.5" fill="#2e86d0">A</text><text x="1009" y="110.3" font-family="Liberation Sans" font-size="10.5" fill="#333">Z</text><path d="M1017.5 95.5 H1028.5 L1024.5 100.5 V104.5 L1021.5 105.5 V100.5 Z" stroke="#333" stroke-width="1.3" stroke-linejoin="round"/><path d="M1035.5 99 L1039.0 102.5 L1042.5 99" stroke="#444" stroke-width="1.3"/><rect x="1079.5" y="90.5" width="39" height="6" fill="#c8c8c8"/><path d="M1079.5 90.5 H1118.5 V129.5 H1079.5 Z M1079.5 96.5 H1118.5" stroke="#333" stroke-width="1.4"/><path d="M1080 108 H1085 M1110 108 H1118 M1108 118 H1118 M1104 120 V128" stroke="#aaa" stroke-width="1.2"/><circle cx="1097.5" cy="106.8" r="12" fill="#f3f2f1" stroke="#333" stroke-width="1.5"/><path d="M1106.3 115.2 L1118.5 129.3" stroke="#333" stroke-width="1.6"/><rect x="1090.5" y="104.5" width="4" height="7.7" fill="#c8c8c8"/><rect x="1095.5" y="99.5" width="4" height="12.7" fill="#fff" stroke="#333" stroke-width="1.1"/><rect x="1100" y="101.5" width="4.7" height="10.7" fill="#5aa8e8" stroke="#2e86d0" stroke-width=".8"/><path d="M1176.5 196 L1182 190.5 L1187.5 196" stroke="#444" stroke-width="1.3"/><path d="M117 228 H125.5 L121.25 232 Z" fill="#777"/><path d="M187.5 224.5 L200.5 237.5 M200.5 224.5 L187.5 237.5" stroke="#b5b5b5" stroke-width="1.9"/><path d="M231.5 231 L237 236.5 L247.5 225" stroke="#b5b5b5" stroke-width="2.4"/><g stroke="#8a8a8a" stroke-width="1.7" stroke-linecap="round"><path d="M275.5 238 C277.5 238.5 278.5 237 279.2 234 L281.5 223.5 C282 221 283.5 220.3 285.8 220.8 M278.3 227.5 H285.3"/><path d="M282.3 229.5 C284.3 229 285.3 230.5 286.2 233 L287.3 236.3 C287.8 237.5 289.3 237.3 290.3 236 M290.5 229.8 C289 229 287.8 230.3 286.6 232 L283.8 236.2 C283 237.5 282.3 237.5 281.5 237" stroke-width="1.5"/></g><path d="M1178.5 228.5 L1182.8 232.5 L1187 228.5" stroke="#777" stroke-width="1.8"/></svg><svg style="position:absolute;left:0;top:0" width="1200" height="675" viewBox="0 0 1200 675" fill="none"><path d="M34.5 627.5 V637.5 L29 632.5 Z" fill="#217346"/><path d="M58 627.5 V637.5 L63.5 632.5 Z" fill="#217346"/><rect x="83.5" y="633.5" width="2" height="2" fill="#333"/><rect x="88.7" y="633.5" width="2" height="2" fill="#333"/><rect x="93.9" y="633.5" width="2" height="2" fill="#333"/><path d="M104.5 622.5 V642.5" stroke="#888" stroke-width="1"/><path d="M260.5 622.5 V642.5" stroke="#888" stroke-width="1"/><path d="M659.5 622.5 V642.5" stroke="#888" stroke-width="1"/><rect x="752" y="633.5" width="2" height="2" fill="#217346"/><rect x="757.5" y="633.5" width="2" height="2" fill="#217346"/><rect x="763" y="633.5" width="2" height="2" fill="#217346"/><circle cx="786" cy="633.2" r="9.3" stroke="#777" stroke-width="1.3" fill="#f0f0f0"/><path d="M786 627.5 V639 M780.3 633.2 H791.7" stroke="#555" stroke-width="1.4"/><rect x="814" y="627" width="2.5" height="2.5" fill="#aaa"/><rect x="814" y="632.5" width="2.5" height="2.5" fill="#aaa"/><rect x="814" y="638" width="2.5" height="2.5" fill="#aaa"/><rect x="832.5" y="623.5" width="299" height="18" fill="#fff" stroke="#ababab"/><path d="M850.5 623.5 V641.5" stroke="#ababab"/><path d="M843.5 628.2 V637 L838.5 632.6 Z" fill="#222"/><rect x="1155.5" y="623.5" width="18" height="18" fill="#fff" stroke="#ababab"/><path d="M1163 628.2 V637 L1168 632.6 Z" fill="#222"/><rect x="1177.5" y="259.5" width="18.5" height="18.5" fill="#fff" stroke="#ababab"/><path d="M1182 271.5 H1191 L1186.5 266.3 Z" fill="#222"/><rect x="1178.5" y="279.5" width="17" height="154" fill="#fff" stroke="#ababab"/><rect x="1177.5" y="600.5" width="18.5" height="18" fill="#fff" stroke="#ababab"/><path d="M1182 607.8 H1191 L1186.5 613 Z" fill="#222"/><path d="M72 669 V654 H88.5 V661 M72 657 H88.5 M72 668.5 H77" stroke="#555" stroke-width="1.3"/><path d="M74.5 660.5 H77.5 M74.5 664 H77.5" stroke="#777" stroke-width="1.3"/><circle cx="83" cy="664" r="5" fill="#f3f2f1" stroke="#555" stroke-width="1.4"/><circle cx="83" cy="664" r="2.2" fill="#555"/><path d="M683 663.5 H676.5 V653.5 H693.5 V659" stroke="#555" stroke-width="1.3"/><circle cx="688.5" cy="664" r="3.6" stroke="#555" stroke-width="2.6" stroke-dasharray="1.6 1.2"/><circle cx="688.5" cy="664" r="2.6" stroke="#555" stroke-width="1.2" fill="#f3f2f1"/><circle cx="688.5" cy="664" r="1" fill="#555"/><rect x="813" y="648" width="50" height="25" fill="#d2d2d2"/><path d="M829.5 653.5 H845 V668.5 H829.5 Z M834.5 653.5 V668.5 M840 653.5 V668.5 M829.5 658.5 H845 M829.5 663.5 H845" stroke="#555" stroke-width="1.3"/><rect x="879.5" y="653.5" width="17" height="15" stroke="#555" stroke-width="1.3"/><rect x="882.5" y="656.5" width="11" height="9" stroke="#555" stroke-width="1"/><path d="M885 659.5 H891 M885 662.5 H891" stroke="#555"/><path d="M929.5 653.5 H946.5 V668.5 H929.5 Z M929.5 662 H940 V653.5 M934.5 653.5 V662" stroke="#555" stroke-width="1.3"/><path d="M970 661.5 H980 M986 661.5 H1110 M1117 661.5 H1127 M1122 656.5 V666.5" stroke="#555" stroke-width="1.2"/><rect x="1046" y="654" width="6" height="13.7" fill="#444"/></svg><div style="position:absolute;left:426px;top:618px;width:60px;height:26px;background:#fff;border-left:1px solid #9a9a9a;border-right:1px solid #9a9a9a;box-sizing:border-box"></div><div style="position:absolute;left:426px;top:641px;width:60px;height:3px;background:#217346"></div><div class="t" style="left:118.12px;top:621px;font-size:16.42px;font-weight:normal;color:#444;transform:scaleX(0.9525);-webkit-text-stroke:0.15px #444;">SUMIF_COUNTIF</div><div class="t" style="left:274.50px;top:621px;font-size:16.42px;font-weight:normal;color:#444;transform:scaleX(1.0235);-webkit-text-stroke:0.15px #444;">ZeroBasedBudget</div><div class="t" style="left:437.99px;top:621px;font-size:16.42px;font-weight:bold;color:#217346;transform:scaleX(1.0222);">MTE</div><div class="t" style="left:501.13px;top:621px;font-size:16.42px;font-weight:normal;color:#444;transform:scaleX(1.0125);-webkit-text-stroke:0.15px #444;">Scenario Summary</div><div class="t" style="left:673.83px;top:621px;font-size:16.42px;font-weight:normal;color:#444;transform:scaleX(1.0183);-webkit-text-stroke:0.15px #444;">Scenariol</div><div class="t" style="left:10.70px;top:655px;font-size:13.08px;font-weight:normal;color:#555;transform:scaleX(0.9520);-webkit-text-stroke:0.15px #555;">Ready</div><div class="t" style="left:696.46px;top:656px;font-size:12.35px;font-weight:normal;color:#444;transform:scaleX(1.0494);-webkit-text-stroke:0.15px #444;">Display Settings</div><div class="t" style="left:1142.12px;top:656px;font-size:12.35px;font-weight:normal;color:#666;transform:scaleX(1.0210);-webkit-text-stroke:0.15px #666;">100%</div><div style="position:absolute;left:611px;top:115px;width:241px;height:413px;background:#fff;border:1px solid #c8c6c4;box-sizing:border-box;box-shadow:2px 3px 5px rgba(0,0,0,.16)"></div><div style="position:absolute;left:612px;top:117px;width:239px;height:59px;background:#d2d0ce"></div><div style="position:absolute;left:668px;top:236px;width:183px;height:1px;background:#e1dfdd"></div><div style="position:absolute;left:613px;top:416px;width:237px;height:1px;background:#e1dfdd"></div><div style="position:absolute;left:851px;top:115px;width:240px;height:457px;background:#fff;border:1px solid #c8c6c4;box-sizing:border-box;box-shadow:2px 3px 5px rgba(0,0,0,.16)"></div><div style="position:absolute;left:853px;top:533px;width:236px;height:1px;background:#e1dfdd"></div><div class="t" style="left:678.64px;top:142px;font-size:15.55px;font-weight:bold;color:#1b1b1b;transform:scaleX(0.9207);">Highlight Cells Rules</div><div class="t" style="left:679.25px;top:201px;font-size:16.72px;font-weight:bold;color:#1b1b1b;transform:scaleX(0.9123);">Top/Bottom Rules</div><div class="t" style="left:678.32px;top:263px;font-size:15.41px;font-weight:bold;color:#1b1b1b;transform:scaleX(0.9536);">Data Bars</div><div class="t" style="left:679.04px;top:322px;font-size:15.55px;font-weight:bold;color:#1b1b1b;transform:scaleX(0.8987);">Color</div><div class="t" style="left:720.13px;top:322px;font-size:15.55px;font-weight:bold;color:#1b1b1b;transform:scaleX(0.8531);">Scales</div><div class="t" style="left:678.14px;top:381px;font-size:15.12px;font-weight:bold;color:#1b1b1b;transform:scaleX(0.9534);">Icon Sets</div><div class="t" style="left:657.16px;top:427px;font-size:16.42px;font-weight:normal;color:#333;transform:scaleX(0.8708);-webkit-text-stroke:0.15px #333;">New Rule...</div><div class="t" style="left:657.30px;top:463px;font-size:16.42px;font-weight:normal;color:#333;transform:scaleX(0.8524);-webkit-text-stroke:0.15px #333;">Clear Rules</div><div class="t" style="left:657.81px;top:500px;font-size:15.26px;font-weight:normal;color:#333;transform:scaleX(0.9743);-webkit-text-stroke:0.15px #333;">Manage</div><div class="t" style="left:715.75px;top:500px;font-size:15.26px;font-weight:normal;color:#333;transform:scaleX(0.8582);-webkit-text-stroke:0.15px #333;">Rules...</div><div class="t" style="left:918.91px;top:145px;font-size:14.97px;font-weight:bold;color:#1b1b1b;transform:scaleX(0.9852);">Greater Than...</div><div class="t" style="left:918.65px;top:203px;font-size:15.12px;font-weight:bold;color:#1b1b1b;transform:scaleX(0.9350);">Less Than...</div><div class="t" style="left:918.60px;top:262px;font-size:15.55px;font-weight:bold;color:#1b1b1b;transform:scaleX(0.9610);">Between...</div><div class="t" style="left:918.62px;top:322px;font-size:16.57px;font-weight:bold;color:#1b1b1b;transform:scaleX(0.8853);">Equal To...</div><div class="t" style="left:919.35px;top:379px;font-size:16.42px;font-weight:bold;color:#1b1b1b;transform:scaleX(0.9047);">Text that Contains...</div><div class="t" style="left:918.71px;top:439px;font-size:15.41px;font-weight:bold;color:#1b1b1b;transform:scaleX(0.9499);">A Date Occurring...</div><div class="t" style="left:918.12px;top:498px;font-size:15.55px;font-weight:bold;color:#1b1b1b;transform:scaleX(0.9460);">Duplicate Values...</div><div class="t" style="left:897.16px;top:545px;font-size:15.55px;font-weight:normal;color:#333;transform:scaleX(0.9204);-webkit-text-stroke:0.15px #333;">More Rules...</div><svg style="position:absolute;left:0;top:0" width="1200" height="675" viewBox="0 0 1200 675" fill="none"><path d="M679.5 156.4 H690" stroke="#222" stroke-width="1.2"/><path d="M679.4 215.7 H688" stroke="#222" stroke-width="1.2"/><path d="M679.2 277.4 H689.5" stroke="#222" stroke-width="1.2"/><path d="M720.2 336.6 H728" stroke="#222" stroke-width="1.2"/><path d="M679.2 395.3 H682.5" stroke="#222" stroke-width="1.2"/><path d="M658.3 442.9 H668" stroke="#222" stroke-width="1.2"/><path d="M658 478.9 H666.5" stroke="#222" stroke-width="1.2"/><path d="M716.5 514.5 H725" stroke="#222" stroke-width="1.2"/><path d="M919.5 158.4 H929.5" stroke="#222" stroke-width="1.2"/><path d="M919.5 217.6 H927.5" stroke="#222" stroke-width="1.2"/><path d="M919.5 276.3 H928.5" stroke="#222" stroke-width="1.2"/><path d="M919.5 336.3 H927.5" stroke="#222" stroke-width="1.2"/><path d="M919.5 394.9 H928" stroke="#222" stroke-width="1.2"/><path d="M919.3 453.7 H929" stroke="#222" stroke-width="1.2"/><path d="M919.3 512.6 H929" stroke="#222" stroke-width="1.2"/><path d="M898.3 559.6 H910" stroke="#222" stroke-width="1.2"/><path d="M834 140.2 L839.5 145.5 L834 150.8" stroke="#333" stroke-width="1.2"/><path d="M834 199.2 L839.5 204.5 L834 209.8" stroke="#333" stroke-width="1.2"/><path d="M834 261.2 L839.5 266.5 L834 271.8" stroke="#333" stroke-width="1.2"/><path d="M834 320.2 L839.5 325.5 L834 330.8" stroke="#333" stroke-width="1.2"/><path d="M834 379.2 L839.5 384.5 L834 389.8" stroke="#333" stroke-width="1.2"/><path d="M834 465.2 L839.5 470.5 L834 475.8" stroke="#333" stroke-width="1.2"/><path d="M632.5 132.2 H667.5 V159.39999999999998 H632.5 Z M641.7 132.2 V159.39999999999998 M658.2 132.2 V159.39999999999998 M632.5 141.39999999999998 H667.5 M632.5 150.1 H667.5" stroke="#4a4a4a" stroke-width="1.3" fill="#fff"/><rect x="641.7" y="141.39999999999998" width="16.5" height="8.7" fill="#e3a457" stroke="#d8923f" stroke-width="1"/><rect x="648.0" y="148.7" width="21.7" height="17" fill="#f7f7f7" stroke="#444" stroke-width="1.5"/><path d="M662.0 152.5 L655.2 155.89999999999998 L662.0 159.2 M655.0 161.7 H662.0" stroke="#222" stroke-width="1.2"/><path d="M632.5 191.3 H667.5 V218.5 H632.5 Z M641.7 191.3 V218.5 M658.2 191.3 V218.5 M632.5 200.5 H667.5 M632.5 209.20000000000002 H667.5" stroke="#4a4a4a" stroke-width="1.3" fill="#fff"/><rect x="641.7" y="191.3" width="16.5" height="27.2" fill="#fdd48a" stroke="#ec9a36" stroke-width="1.2"/><path d="M632.5 200.5 H641.7 M632.5 209.20000000000002 H641.7 M658.2 200.5 H667.5 M658.2 209.20000000000002 H667.5" stroke="#4a4a4a" stroke-width="1.3"/><path d="M649.5 194.3 V206.3 M644.0 199.60000000000002 L649.5 194.10000000000002 L655.0 199.60000000000002" stroke="#333" stroke-width="1.2"/><rect x="648.0" y="207.8" width="21.7" height="17" fill="#f7f7f7" stroke="#444" stroke-width="1.5"/><text x="653.2" y="221.60000000000002" font-family="Liberation Sans" font-size="12.5" fill="#4a4a4a" letter-spacing="-1">10</text><path d="M632.5 253.3 H667.5 V280.5 H632.5 Z M638.9 253.3 V280.5 M660.7 253.3 V280.5 M632.5 262.5 H667.5 M632.5 271.2 H667.5" stroke="#4a4a4a" stroke-width="1.3" fill="#fff"/><path d="M638.9 253.3 H649.8 V262.5 H643.6 V271.2 H647.2 V280.5 H638.9 Z" fill="#8ec3f0" stroke="#2b79c2" stroke-width="1.3"/><path d="M632.3 312.1 H667.3 V339.3 H632.3 Z M638.9 312.1 V339.3 M661.0 312.1 V339.3 M632.3 321.3 H667.3 M632.3 330.0 H667.3" stroke="#4a4a4a" stroke-width="1.3" fill="#fff"/><rect x="638.9" y="312.1" width="22.1" height="9.1" fill="#8abeec" stroke="#2b79c2" stroke-width="1.2"/><rect x="638.9" y="321.20000000000005" width="22.1" height="9.1" fill="#f9d98a" stroke="#ec9a36" stroke-width="1.2"/><rect x="638.9" y="330.3" width="22.1" height="9" fill="#f7878a" stroke="#d13438" stroke-width="1.2"/><path d="M632.3 371.2 H667.3 V398.4 H632.3 Z M638.9 371.2 V398.4 M661.0 371.2 V398.4 M632.3 380.4 H667.3 M632.3 389.09999999999997 H667.3" stroke="#4a4a4a" stroke-width="1.3" fill="#fff"/><circle cx="643.0999999999999" cy="375.8" r="1.8" fill="#2b88d8"/><path d="M652.3 375.8 H658.8" stroke="#666" stroke-width="1.2"/><circle cx="643.0999999999999" cy="384.90000000000003" r="1.8" fill="#e04848"/><path d="M652.3 384.90000000000003 H658.8" stroke="#666" stroke-width="1.2"/><circle cx="643.0999999999999" cy="394.0" r="1.8" fill="#2b88d8"/><path d="M652.3 394.0 H658.8" stroke="#666" stroke-width="1.2"/><path d="M627.1 425.1 H646.7 V442.70000000000005 H627.1 Z M632.7 425.1 V442.70000000000005 M641.6 425.1 V442.70000000000005 M627.1 430.40000000000003 H646.7 M627.1 436.90000000000003 H646.7" stroke="#3a3a3a" stroke-width="1.4" fill="#fff"/><rect x="632.7" y="430.4" width="8.9" height="6.5" fill="#fdd48a" stroke="#ec9a36" stroke-width="1.5"/><path d="M627.1 461.6 H646.7 V479.20000000000005 H627.1 Z M632.7 461.6 V479.20000000000005 M641.6 461.6 V479.20000000000005 M627.1 466.90000000000003 H646.7 M627.1 473.40000000000003 H646.7" stroke="#3a3a3a" stroke-width="1.4" fill="#fff"/><rect x="632.7" y="466.9" width="8.9" height="6.5" fill="#fdd48a" stroke="#ec9a36" stroke-width="1.5"/><path d="M634.8 476 L641.5 469.3 L647 474.8 L640.3 481.5 Z" fill="#fff" stroke="#8a3fb5" stroke-width="1.7"/><path d="M638 472.6 L643.6 478.2" stroke="#8a3fb5" stroke-width="1.4"/><path d="M627.5 512.5 V496.5 H644" stroke="#444" stroke-width="1.1"/><path d="M629.4 498 H646.6999999999999 V514.6 H629.4 Z M635.0 498 V514.6 M641.5999999999999 498 V514.6 M629.4 503.3 H646.6999999999999 M629.4 508.8 H646.6999999999999" stroke="#3a3a3a" stroke-width="1.4" fill="#fff"/><rect x="634.5" y="503" width="7.7" height="5.6" fill="#fdd48a" stroke="#ec9a36" stroke-width="1.5"/><path d="M872.5 134.2 H907.5 V161.39999999999998 H872.5 Z M881.7 134.2 V161.39999999999998 M898.2 134.2 V161.39999999999998 M872.5 143.39999999999998 H907.5 M872.5 152.1 H907.5" stroke="#4a4a4a" stroke-width="1.3" fill="#fff"/><rect x="881.7" y="143.39999999999998" width="16.5" height="8.7" fill="#fdd48a" stroke="#ec9a36" stroke-width="1.2"/><rect x="888.0" y="150.7" width="21.7" height="17" fill="#f7f7f7" stroke="#444" stroke-width="1.5"/><path d="M895.5 154.7 L903.5 159.2 L895.5 163.7" stroke="#222" stroke-width="1.2"/><path d="M872.5 193.2 H907.5 V220.39999999999998 H872.5 Z M881.7 193.2 V220.39999999999998 M898.2 193.2 V220.39999999999998 M872.5 202.39999999999998 H907.5 M872.5 211.1 H907.5" stroke="#4a4a4a" stroke-width="1.3" fill="#fff"/><rect x="881.7" y="202.39999999999998" width="16.5" height="8.7" fill="#fdd48a" stroke="#ec9a36" stroke-width="1.2"/><rect x="888.0" y="209.7" width="21.7" height="17" fill="#f7f7f7" stroke="#444" stroke-width="1.5"/><path d="M903.5 213.7 L895.5 218.2 L903.5 222.7" stroke="#222" stroke-width="1.2"/><path d="M872.5 252 H907.5 V279.2 H872.5 Z M881.7 252 V279.2 M898.2 252 V279.2 M872.5 261.2 H907.5 M872.5 269.9 H907.5" stroke="#4a4a4a" stroke-width="1.3" fill="#fff"/><rect x="881.7" y="261.2" width="16.5" height="8.7" fill="#fdd48a" stroke="#ec9a36" stroke-width="1.2"/><rect x="872.5" y="252" width="9.2" height="9.2" fill="#8ec3f0" stroke="#2b79c2" stroke-width="1.2"/><rect x="898.2" y="252" width="9.3" height="9.2" fill="#8ec3f0" stroke="#2b79c2" stroke-width="1.2"/><path d="M872.5 311.5 H907.5 V338.7 H872.5 Z M881.7 311.5 V338.7 M898.2 311.5 V338.7 M872.5 320.7 H907.5 M872.5 329.4 H907.5" stroke="#4a4a4a" stroke-width="1.3" fill="#fff"/><rect x="881.7" y="320.7" width="16.5" height="8.7" fill="#fdd48a" stroke="#ec9a36" stroke-width="1.2"/><rect x="888.0" y="328.0" width="21.7" height="17" fill="#f7f7f7" stroke="#444" stroke-width="1.5"/><path d="M892.5 333.7 H904.5 M892.5 339.0 H904.5" stroke="#444" stroke-width="1.4"/><path d="M872.5 370.7 H907.5 V397.9 H872.5 Z M881.7 370.7 V397.9 M898.2 370.7 V397.9 M872.5 379.9 H907.5 M872.5 388.59999999999997 H907.5" stroke="#4a4a4a" stroke-width="1.3" fill="#fff"/><rect x="881.7" y="379.9" width="16.5" height="8.7" fill="#fdd48a" stroke="#ec9a36" stroke-width="1.2"/><rect x="888.0" y="387.2" width="21.7" height="17" fill="#f7f7f7" stroke="#444" stroke-width="1.5"/><text x="892.8" y="401.5" font-family="Liberation Sans" font-size="17" fill="#444">a</text><path d="M872.5 429.2 H907.5 V456.4 H872.5 Z M881.7 429.2 V456.4 M898.2 429.2 V456.4 M872.5 438.4 H907.5 M872.5 447.09999999999997 H907.5" stroke="#4a4a4a" stroke-width="1.3" fill="#fff"/><rect x="881.7" y="438.4" width="16.5" height="8.7" fill="#fdd48a" stroke="#ec9a36" stroke-width="1.2"/><rect x="891.0" y="445.7" width="18.7" height="17" fill="#f7f7f7" stroke="#444" stroke-width="1.4"/><path d="M891.0 449.7 H909.7 M894.5 443.7 V447.2 M906.0 443.7 V447.2" stroke="#444" stroke-width="1.3"/><path d="M872.5 488 H907.5 V515.2 H872.5 Z M881.7 488 V515.2 M898.2 488 V515.2 M872.5 497.2 H907.5 M872.5 505.9 H907.5" stroke="#4a4a4a" stroke-width="1.3" fill="#fff"/><rect x="881.7" y="488" width="16.5" height="9.2" fill="#fdd48a" stroke="#ec9a36" stroke-width="1.3"/><rect x="881.7" y="505.9" width="16.5" height="9.3" fill="#fdd48a" stroke="#ec9a36" stroke-width="1.3"/><rect x="852.5" y="116.5" width="239" height="235" stroke="#e8574b" stroke-width="3"/></svg></body></html>
